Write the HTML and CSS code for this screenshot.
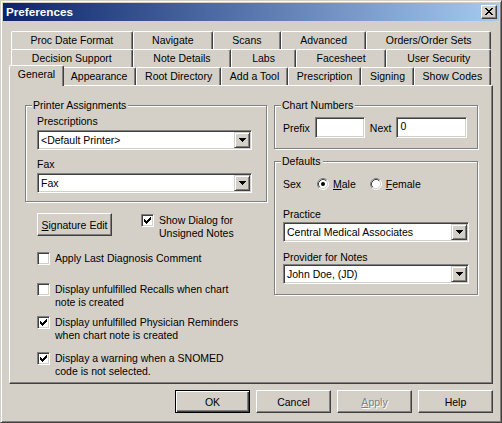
FILE: index.html
```html
<!DOCTYPE html>
<html lang="en">
<head>
<meta charset="utf-8">
<title>Preferences</title>
<link rel="stylesheet" href="styles.css">
</head>
<body>
<div class="window">
  <div class="titlebar">
    <span class="title">Preferences</span>
    <span class="close">
      <svg width="8" height="7" viewBox="0 0 8 7" shape-rendering="crispEdges"><path fill="#000" d="M0 0h2v1h-2z M6 0h2v1h-2z M1 1h2v1h-2z M5 1h2v1h-2z M2 2h4v1h-4z M3 3h2v1h-2z M2 4h4v1h-4z M1 5h2v1h-2z M5 5h2v1h-2z M0 6h2v1h-2z M6 6h2v1h-2z"/></svg>
    </span>
  </div>

  <div class="sheet">
    <div class="tabs">
      <div class="tabrow">
        <div class="tab">Proc Date Format</div>
        <div class="tab">Navigate</div>
        <div class="tab">Scans</div>
        <div class="tab">Advanced</div>
        <div class="tab">Orders/Order Sets</div>
      </div>
      <div class="tabrow">
        <div class="tab">Decision Support</div>
        <div class="tab">Note Details</div>
        <div class="tab">Labs</div>
        <div class="tab">Facesheet</div>
        <div class="tab">User Security</div>
      </div>
      <div class="tabrow">
        <div class="tab selected">General</div>
        <div class="tab">Appearance</div>
        <div class="tab">Root Directory</div>
        <div class="tab">Add a Tool</div>
        <div class="tab">Prescription</div>
        <div class="tab">Signing</div>
        <div class="tab">Show Codes</div>
      </div>
    </div>

    <div class="panel">
      <div class="col">
        <div class="group printers">
          <div class="group-title">Printer Assignments</div>
          <div class="label first">Prescriptions</div>
          <div class="combo">
            <span class="combo-text">&lt;Default Printer&gt;</span>
            <span class="combo-btn"><svg width="7" height="4" viewBox="0 0 7 4" shape-rendering="crispEdges"><path fill="#000" d="M0 0h7v1h-7z M1 1h5v1h-5z M2 2h3v1h-3z M3 3h1v1h-1z"/></svg></span>
          </div>
          <div class="label">Fax</div>
          <div class="combo">
            <span class="combo-text">Fax</span>
            <span class="combo-btn"><svg width="7" height="4" viewBox="0 0 7 4" shape-rendering="crispEdges"><path fill="#000" d="M0 0h7v1h-7z M1 1h5v1h-5z M2 2h3v1h-3z M3 3h1v1h-1z"/></svg></span>
          </div>
        </div>

        <div class="sig-row">
          <button class="btn"><u>S</u>ignature Edit</button>
          <div class="check inline">
            <span class="box"><svg width="7" height="7" viewBox="0 0 7 7" shape-rendering="crispEdges"><path fill="#000" d="M0 2H1V3H2V4H3V3H4V2H5V1H6V0H7V3H6V4H5V5H4V6H3V7H2V6H1V5H0Z"/></svg></span>
            <span class="ctext">Show Dialog for<br>Unsigned Notes</span>
          </div>
        </div>

        <div class="check apply">
          <span class="box"></span>
          <span class="ctext">Apply Last Diagnosis Comment</span>
        </div>
        <div class="check recalls">
          <span class="box"></span>
          <span class="ctext">Display unfulfilled Recalls when chart<br>note is created</span>
        </div>
        <div class="check reminders">
          <span class="box"><svg width="7" height="7" viewBox="0 0 7 7" shape-rendering="crispEdges"><path fill="#000" d="M0 2H1V3H2V4H3V3H4V2H5V1H6V0H7V3H6V4H5V5H4V6H3V7H2V6H1V5H0Z"/></svg></span>
          <span class="ctext">Display unfulfilled Physician Reminders<br>when chart note is created</span>
        </div>
        <div class="check snomed">
          <span class="box"><svg width="7" height="7" viewBox="0 0 7 7" shape-rendering="crispEdges"><path fill="#000" d="M0 2H1V3H2V4H3V3H4V2H5V1H6V0H7V3H6V4H5V5H4V6H3V7H2V6H1V5H0Z"/></svg></span>
          <span class="ctext">Display a warning when a SNOMED<br>code is not selected.</span>
        </div>
      </div>

      <div class="col">
        <div class="group chart">
          <div class="group-title">Chart Numbers</div>
          <div class="field-row">
            <span>Prefix</span>
            <span class="input prefix"></span>
            <span>Next</span>
            <span class="input next">0</span>
          </div>
        </div>

        <div class="group defaults">
          <div class="group-title">Defaults</div>
          <div class="sex-row">
            <span class="sex-label">Sex</span>
            <span class="radio">
              <svg width="12" height="12" viewBox="0 0 12 12"><circle cx="6" cy="6" r="5" fill="#fff"/><path d="M2.11 9.89A5.5 5.5 0 0 1 9.89 2.11" fill="none" stroke="#808080"/><path d="M9.89 2.11A5.5 5.5 0 0 1 2.11 9.89" fill="none" stroke="#fff"/><path d="M2.82 9.18A4.5 4.5 0 0 1 9.18 2.82" fill="none" stroke="#404040"/><path d="M9.18 2.82A4.5 4.5 0 0 1 2.82 9.18" fill="none" stroke="#D4D0C8"/><circle cx="6" cy="6" r="2" fill="#000"/></svg>
              <span><u>M</u>ale</span>
            </span>
            <span class="radio">
              <svg width="12" height="12" viewBox="0 0 12 12"><circle cx="6" cy="6" r="5" fill="#fff"/><path d="M2.11 9.89A5.5 5.5 0 0 1 9.89 2.11" fill="none" stroke="#808080"/><path d="M9.89 2.11A5.5 5.5 0 0 1 2.11 9.89" fill="none" stroke="#fff"/><path d="M2.82 9.18A4.5 4.5 0 0 1 9.18 2.82" fill="none" stroke="#404040"/><path d="M9.18 2.82A4.5 4.5 0 0 1 2.82 9.18" fill="none" stroke="#D4D0C8"/></svg>
              <span><u>F</u>emale</span>
            </span>
          </div>
          <div class="label practice">Practice</div>
          <div class="combo">
            <span class="combo-text">Central Medical Associates</span>
            <span class="combo-btn"><svg width="7" height="4" viewBox="0 0 7 4" shape-rendering="crispEdges"><path fill="#000" d="M0 0h7v1h-7z M1 1h5v1h-5z M2 2h3v1h-3z M3 3h1v1h-1z"/></svg></span>
          </div>
          <div class="label provider">Provider for Notes</div>
          <div class="combo">
            <span class="combo-text">John Doe, (JD)</span>
            <span class="combo-btn"><svg width="7" height="4" viewBox="0 0 7 4" shape-rendering="crispEdges"><path fill="#000" d="M0 0h7v1h-7z M1 1h5v1h-5z M2 2h3v1h-3z M3 3h1v1h-1z"/></svg></span>
          </div>
        </div>
      </div>
    </div>
  </div>

  <div class="buttons">
    <button class="btn default">OK</button>
    <button class="btn">Cancel</button>
    <button class="btn disabled"><u>A</u>pply</button>
    <button class="btn">Help</button>
  </div>
</div>
</body>
</html>
```

FILE: styles.css
```css
* {
  box-sizing: border-box;
}

body {
  margin: 0;
  background: #D4D0C8;
  font-family: "Liberation Sans", Arial, sans-serif;
  font-size: 10.5px;
  color: #000;
}

.window {
  width: 502px;
  height: 423px;
  padding: 2px;
  background: #D4D0C8;
  border: 1px solid;
  border-color: #D4D0C8 #404040 #404040 #D4D0C8;
  box-shadow: inset 1px 1px #fff, inset -1px -1px #808080;
}

.titlebar {
  height: 18px;
  display: flex;
  align-items: center;
  justify-content: space-between;
  padding: 0 2px 1px 3px;
  background: linear-gradient(to right, #0A246A, #A6CAF0);
}

.title {
  color: #fff;
  font-weight: bold;
  font-size: 11.7px;
}

.close {
  width: 16px;
  height: 14px;
  display: flex;
  align-items: center;
  justify-content: center;
  padding-right: 1px;
  background: #D4D0C8;
  border: 1px solid;
  border-color: #fff #404040 #404040 #fff;
  box-shadow: inset -1px -1px #808080;
}

.sheet {
  margin: 10px 6px 0;
}

.tabrow {
  display: flex;
  align-items: flex-end;
  height: 18px;
  padding: 0 2px;
}

.tab {
  flex: 1 1 auto;
  height: 18px;
  padding: 0 5px;
  background: #D4D0C8;
  border-top: 1px solid #fff;
  border-left: 1px solid #fff;
  border-right: 1px solid #404040;
  border-radius: 2px 2px 0 0;
  box-shadow: inset -1px 0 #808080;
  text-align: center;
  line-height: 17px;
  white-space: nowrap;
}

.tab.selected {
  height: 21px;
  margin: -2px -2px -1px;
  position: relative;
  z-index: 1;
}

.panel {
  height: 299px;
  display: grid;
  grid-template-columns: 242px 204px;
  column-gap: 7px;
  align-items: start;
  padding: 19px 0 0 15px;
  border: 1px solid;
  border-color: #fff #404040 #404040 #fff;
  box-shadow: inset -1px -1px #808080;
}

.group {
  border: 1px solid #808080;
  box-shadow: 1px 1px #fff, inset 1px 1px #fff;
}

.group-title {
  width: max-content;
  margin-top: -7px;
  padding: 0 2px 0 1px;
  line-height: 13px;
  background: #D4D0C8;
}

.printers .group-title {
  margin-left: -5px;
}

.chart .group-title,
.defaults .group-title {
  margin-left: -2px;
}

.label {
  line-height: 13px;
  margin-top: 8px;
  margin-bottom: 2px;
}

.label.first {
  margin-top: 3px;
}

.printers {
  padding: 0 14px 8px 11px;
}

.combo {
  height: 20px;
  display: flex;
  padding: 1px;
  background: #fff;
  border: 1px solid;
  border-color: #808080 #fff #fff #808080;
  box-shadow: inset 1px 1px #404040, inset -1px -1px #D4D0C8;
}

.combo-text {
  flex: 1;
  padding-left: 2px;
  line-height: 16px;
  white-space: nowrap;
}

.combo-btn {
  width: 16px;
  height: 16px;
  display: flex;
  align-items: center;
  justify-content: center;
  background: #D4D0C8;
  border: 1px solid;
  border-color: #D4D0C8 #404040 #404040 #D4D0C8;
  box-shadow: inset 1px 1px #fff, inset -1px -1px #808080;
}

.sig-row {
  display: flex;
  align-items: flex-start;
  height: 23px;
  margin-top: 11px;
  padding-left: 12px;
}

.btn {
  width: 75px;
  height: 23px;
  padding: 0;
  font: inherit;
  color: #000;
  background: #D4D0C8;
  border: 1px solid;
  border-color: #fff #404040 #404040 #fff;
  box-shadow: inset -1px -1px #808080;
}

.btn.default {
  border-color: #000;
  box-shadow: inset 1px 1px #fff, inset -1px -1px #404040, inset -2px -2px #808080;
}

.btn.disabled {
  color: #808080;
  text-shadow: 1px 1px #fff;
}

.check {
  display: flex;
  align-items: flex-start;
  gap: 5px;
  padding-left: 12px;
}

.check.inline {
  padding-left: 0;
  margin: 1px 0 0 29px;
}

.check.apply {
  margin-top: 16px;
}

.check.recalls {
  margin-top: 18px;
}

.check.reminders {
  margin-top: 7px;
}

.check.snomed {
  margin-top: 10px;
}

.box {
  width: 13px;
  height: 13px;
  flex: none;
  display: flex;
  align-items: center;
  justify-content: center;
  background: #fff;
  border: 1px solid;
  border-color: #808080 #fff #fff #808080;
  box-shadow: inset 1px 1px #404040, inset -1px -1px #D4D0C8;
}

.ctext {
  line-height: 13px;
}

.chart {
  padding: 0 8px 10px 8px;
}

.field-row {
  display: flex;
  align-items: center;
  gap: 5px;
  margin-top: 5px;
}

.input {
  height: 21px;
  padding: 0 3px;
  line-height: 17px;
  background: #fff;
  border: 1px solid;
  border-color: #808080 #fff #fff #808080;
  box-shadow: inset 1px 1px #404040, inset -1px -1px #D4D0C8;
}

.input.prefix {
  width: 50px;
}

.input.next {
  width: 71px;
}

.defaults {
  margin-top: 12px;
  padding: 0 8px 10px 8px;
}

.sex-row {
  display: flex;
  align-items: center;
  height: 13px;
  margin-top: 9px;
}

.sex-label {
  width: 34px;
}

.radio {
  display: flex;
  align-items: center;
  gap: 4px;
  margin-right: 14px;
}

.radio svg {
  display: block;
}

.label.practice {
  margin-top: 18px;
  margin-bottom: 1px;
}

.label.provider {
  margin-top: 9px;
  margin-bottom: 0;
}

.buttons {
  display: flex;
  justify-content: flex-end;
  gap: 6px;
  margin: 6px 6px 0 0;
}
```
